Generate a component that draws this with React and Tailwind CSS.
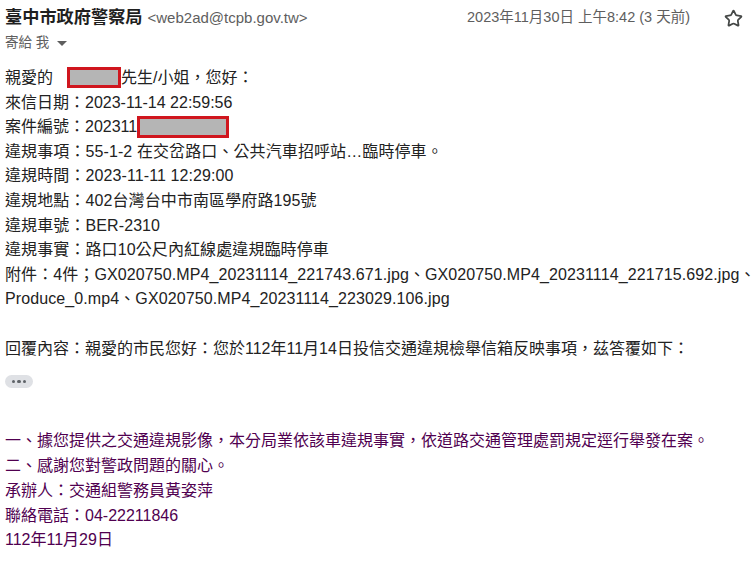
import { Star } from 'lucide-react'

const font = { fontFamily: '"Liberation Sans", Arial, "Noto Sans CJK TC", sans-serif' }

function Redacted({ className }) {
  return (
    <span
      className={`inline-block align-middle border-[3px] border-[#d0161e] bg-[#b5b5b5] ${className}`}
    />
  )
}

const details = [
  '違規事項：55-1-2 在交岔路口、公共汽車招呼站…臨時停車。',
  '違規時間：2023-11-11 12:29:00',
  '違規地點：402台灣台中市南區學府路195號',
  '違規車號：BER-2310',
  '違規事實：路口10公尺內紅線處違規臨時停車',
  '附件：4件；GX020750.MP4_20231114_221743.671.jpg、GX020750.MP4_20231114_221715.692.jpg、',
  'Produce_0.mp4、GX020750.MP4_20231114_223029.106.jpg',
]

const quoted = [
  '一、據您提供之交通違規影像，本分局業依該車違規事實，依道路交通管理處罰規定逕行舉發在案。',
  '二、感謝您對警政問題的關心。',
  '承辦人：交通組警務員黃姿萍',
  '聯絡電話：04-22211846',
  '112年11月29日',
]

export default function App() {
  return (
    <div className="w-[751px] h-[563px] overflow-hidden bg-white text-[#222]" style={font}>
      <div className="flex items-center justify-between h-[24px] mt-[6px] pl-[5px] pr-[8px]">
        <div className="flex items-baseline gap-[5px] whitespace-nowrap">
          <span className="text-[17.2px] font-bold text-[#1f1f1f]">臺中市政府警察局</span>
          <span className="text-[15px] text-[#5e5e5e]">&lt;web2ad@tcpb.gov.tw&gt;</span>
        </div>
        <div className="flex items-center whitespace-nowrap">
          <span className="text-[14.5px] text-[#5e5e5e]">2023年11月30日 上午8:42 (3 天前)</span>
          <Star size={19} strokeWidth={2.2} className="ml-[34px] text-[#444746]" />
        </div>
      </div>
      <div className="flex items-center h-[20px] mt-[3px] pl-[5px] text-[13.5px] text-[#5e5e5e]">
        <span>寄給 我</span>
        <span className="ml-[8px] inline-block w-0 h-0 border-l-[5px] border-r-[5px] border-t-[5px] border-l-transparent border-r-transparent border-t-[#5e5e5e]" />
      </div>

      <div className="mt-[13px] pl-[5px] text-[16px] leading-[24.6px] whitespace-nowrap">
        <div>
          親愛的
          <Redacted className="ml-[14px] w-[54px] h-[21px] -mt-[2px]" />
          先生/小姐，您好：
        </div>
        <div>來信日期：2023-11-14 22:59:56</div>
        <div>
          案件編號：202311
          <Redacted className="w-[92px] h-[22px] -mt-[2px]" />
        </div>
        {details.map((line) => (
          <div key={line} className="tracking-[0.1px]">{line}</div>
        ))}
        <div className="h-[24.6px]" />
        <div>回覆內容：親愛的市民您好：您於112年11月14日投信交通違規檢舉信箱反映事項，茲答覆如下：</div>

        <div className="mt-[14px] flex items-center justify-center gap-[2px] w-[28px] h-[13px] rounded-full bg-[#dfe1e5]">
          <span className="w-[3.5px] h-[3.5px] rounded-full bg-[#5f6368]" />
          <span className="w-[3.5px] h-[3.5px] rounded-full bg-[#5f6368]" />
          <span className="w-[3.5px] h-[3.5px] rounded-full bg-[#5f6368]" />
        </div>

        <div className="mt-[41px] text-[#500050] leading-[24.8px]">
          {quoted.map((line) => (
            <div key={line}>{line}</div>
          ))}
        </div>
      </div>
    </div>
  )
}
